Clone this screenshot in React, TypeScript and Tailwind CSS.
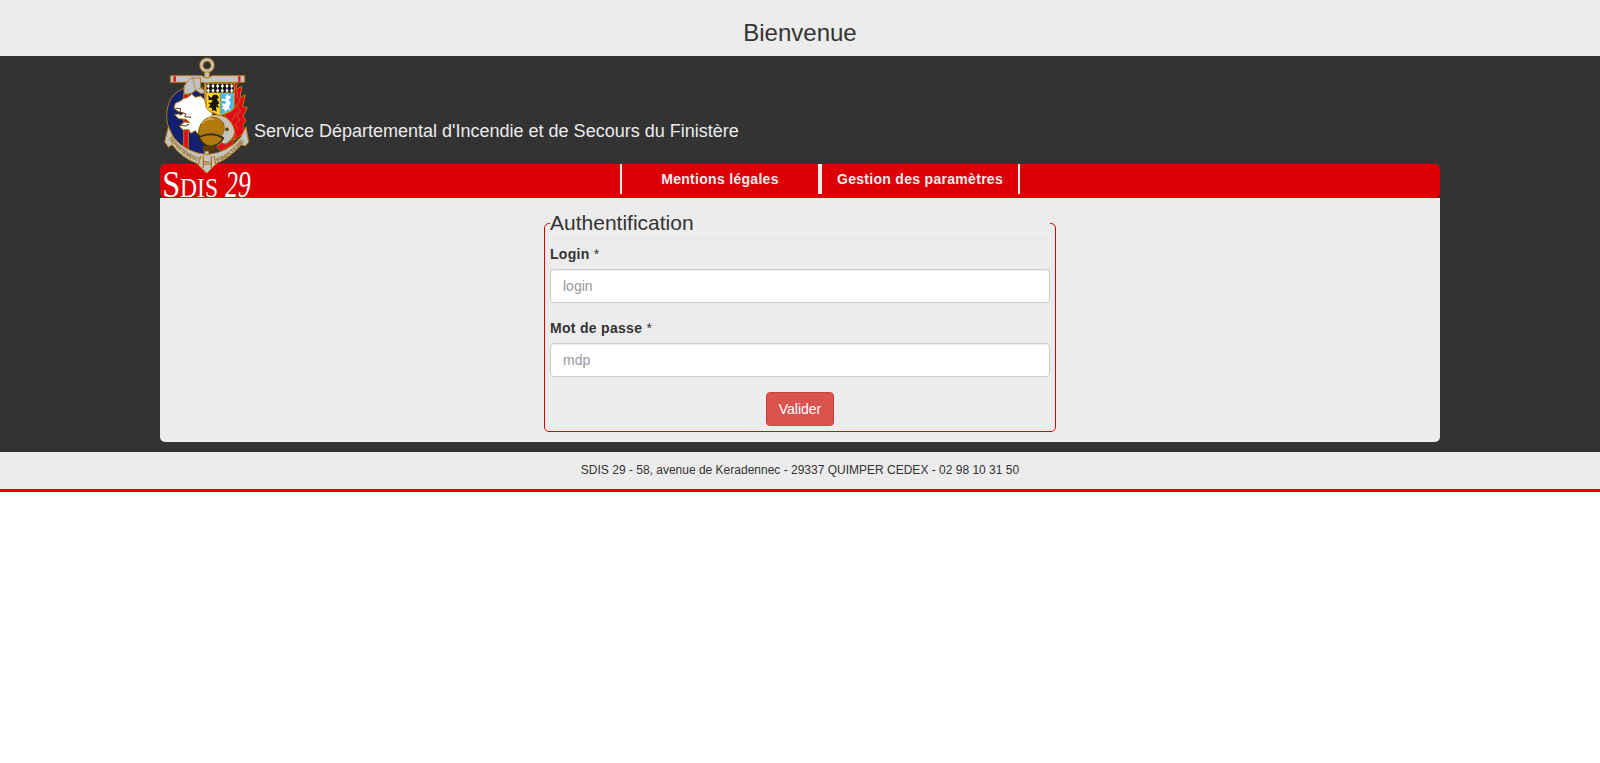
function Crest() {
  const gold = "#b27a0c";
  return (
    <svg
      viewBox="0 0 294 432"
      className="absolute -top-[2px] -left-[2px] h-[144px] w-[98px]"
      role="img"
      aria-label="SDIS 29"
    >
      <g stroke={gold} strokeWidth="3" strokeLinejoin="round">
        {/* anchor ring */}
        <circle cx="147" cy="34" r="17" fill="none" strokeWidth="13" />
        <circle cx="147" cy="34" r="17" fill="none" stroke="#c3c3c3" strokeWidth="7" />
        {/* blue disc */}
        <path d="M82 102C44 112 26 148 26 186C26 222 46 252 68 276L150 320V102Z" fill="#13206f" />
        {/* flames */}
        <path
          d="M165 88L176 70L182 86L198 68L203 84L222 72L220 90L240 78L234 106L252 96L246 132L262 122L254 158L268 160L256 186L264 200L254 214L262 232L226 262L204 240L200 170Z"
          fill="#e30a1c"
        />
        <path d="M236 106L238 128L246 140L236 156L248 170L236 184L246 198L232 210L240 226M222 200L234 176M228 166L238 152M212 244L222 214" fill="none" strokeWidth="2.5" />
        {/* anchor stock and shank */}
        <path d="M140 54H154V72H140Z" fill="#c3c3c3" />
        <path d="M37 65H132Q147 78 162 65H260V85H162Q147 92 132 85H37Z" fill="#c3c3c3" />
        <path d="M50 67V83M244 67V83" stroke="#e30a1c" strokeWidth="7" />
        <path d="M140 88H152V320H140Z" fill="#c3c3c3" />
        {/* axe */}
        <path d="M77 120H91V290H77Z" fill="#e30a1c" />
        <path d="M78 112V98Q90 74 104 72H128V102Q140 108 140 112V118H128L112 108Q104 120 92 120H78Z" fill="#c3c3c3" />
        <path d="M104 72L112 106M128 102L112 108" fill="none" strokeWidth="2" />
        {/* dog head */}
        <path
          d="M101 120L112 130L128 126L140 138L146 160L160 172L164 184L134 204L120 240L112 230L98 238L92 226L76 228L64 216L80 204L96 206L84 196L62 194L50 182L62 180L68 184L76 178L60 172L48 162L52 148L66 142L76 134L90 130Z"
          fill="#fff"
        />
        <path d="M52 162L68 164L66 174L84 180L80 188L100 190M64 214L82 216L94 210" fill="none" stroke="#5a3b08" strokeWidth="3" />
        {/* coat of arms */}
        <path d="M144 87H229V156Q226 174 204 178L187 186L170 178Q146 172 144 156Z" fill="#ffd42a" />
      </g>
      <path d="M187 118H227V156Q224 172 204 175L187 183Z" fill="#42b8ee" />
      <path d="M146 89H227V116H146Z" fill="#111" />
      <path
        d="M146 96l5-7 5 7-5 7zM160 96l5-7 5 7-5 7zM174 96l5-7 5 7-5 7zM188 96l5-7 5 7-5 7zM202 96l5-7 5 7-5 7zM216 96l5-7 5 7-5 7zM146 110l5-7 5 7-5 6zM160 110l5-7 5 7-5 6zM174 110l5-7 5 7-5 6zM188 110l5-7 5 7-5 6zM202 110l5-7 5 7-5 6zM216 110l5-7 5 7-5 6z"
        fill="#fff"
      />
      <path
        d="M151 124L160 132L166 122L176 122L183 130L177 136L184 148L178 152L184 162L174 158L176 174L168 168L162 172L162 162L150 160L158 154L150 146L160 146L164 138L152 138Z"
        fill="#17150f"
      />
      <path
        d="M202 126L210 120L222 126L218 134L212 136L218 148L213 158L217 168L208 166L202 174L198 164L191 166L196 156L190 148L202 150L204 142L192 140L190 134L204 136Z"
        fill="#fff"
      />
      <path d="M210 122L222 128L216 134" fill="none" stroke="#176b9c" strokeWidth="2" />
      <path d="M187 118V184" stroke="#b27a0c" strokeWidth="2" />

      <g stroke={gold} strokeWidth="3" strokeLinejoin="round">
        {/* helmet */}
        <path d="M122 250Q118 204 152 190Q172 178 202 190Q224 202 230 232Q230 252 206 268Q184 276 160 274Z" fill="#c3c3c3" />
        <path d="M122 244Q120 206 152 191Q178 184 196 206Q204 226 192 244Q158 232 122 244Z" fill={gold} stroke="#7b520a" strokeWidth="2" />
        <path d="M150 193Q172 176 206 196M200 204Q220 216 214 250M132 208Q150 190 168 196" fill="none" stroke="#e3c78b" strokeWidth="3" />
        <circle cx="207" cy="226" r="5" fill="#13206f" />
        <path d="M120 244Q126 250 138 244Q168 236 196 252Q188 270 160 278Q134 278 120 244Z" fill={gold} stroke="#332a16" strokeWidth="5" />
        <path d="M134 276H172V292H134Z" fill="#5a3b08" stroke="none" />
        <path d="M176 280L192 264L200 274L222 260L234 240L224 272L190 290Z" fill="#e30a1c" strokeWidth="2" />
        {/* ribbon */}
        <path
          d="M31 218L46 250Q84 296 147 302Q210 296 248 250L264 218L272 264L262 276L250 272Q216 312 176 328L146 358L116 328Q72 312 42 272L32 280L20 264Z"
          fill="#c3c3c3"
        />
        <path d="M128 306L120 334M136 306V342M160 306V342M168 306L174 334" fill="none" strokeWidth="4" />
      </g>
      <path id="ribbon-left" d="M32 254Q68 304 124 325" fill="none" />
      <path id="ribbon-right" d="M178 325Q228 306 262 256" fill="none" />
      <g fill="#9a6908" fontFamily="Liberation Sans, Arial, sans-serif" fontSize="17" fontWeight="bold">
        <text>
          <textPath href="#ribbon-left" textLength="112" lengthAdjust="spacingAndGlyphs">
            DEPARTEMENT
          </textPath>
        </text>
        <text>
          <textPath href="#ribbon-right" textLength="104" lengthAdjust="spacingAndGlyphs">
            FINISTERE
          </textPath>
        </text>
        <text x="138" y="334" fontSize="15">
          DU
        </text>
      </g>
      <g fill="#fff" fontFamily="Liberation Serif, Times New Roman, serif">
        <text x="13" y="430" fontSize="112" textLength="54" lengthAdjust="spacingAndGlyphs">
          S
        </text>
        <text x="66" y="430" fontSize="84" textLength="114" lengthAdjust="spacingAndGlyphs">
          DIS
        </text>
        <text x="202" y="430" fontSize="112" fontStyle="italic" textLength="76" lengthAdjust="spacingAndGlyphs">
          29
        </text>
      </g>
    </svg>
  );
}

function NavItem({ label }: { label: string }) {
  return (
    <li className="h-[30px] w-[200px] border-x-2 border-[#ececec] text-center leading-[30px]">
      <a href="#" className="text-sm leading-[30px] font-bold tracking-[0.3px] text-[#ececec]">
        {label}
      </a>
    </li>
  );
}

function Field({ id, label, placeholder, type }: { id: string; label: string; placeholder: string; type: string }) {
  return (
    <div className="mb-[15px]">
      <label htmlFor={id} className="mb-[5px] block h-5 text-sm leading-5 font-bold tracking-[0.3px]">
        {label} <span className="font-normal">*</span>
      </label>
      <input
        id={id}
        type={type}
        placeholder={placeholder}
        className="block h-[34px] w-full rounded border border-[#cccccc] bg-white px-3 py-1.5 text-sm shadow-[inset_0_1px_1px_rgba(0,0,0,0.075)] placeholder:text-[#999999]"
      />
    </div>
  );
}

export default function App() {
  return (
    <div className="bg-white font-['Liberation_Sans',Arial,sans-serif] text-sm text-[#333333]">
      <header className="h-14 bg-[#ececec] pt-5 text-center">
        <h1 className="text-2xl leading-[26px]">Bienvenue</h1>
      </header>

      <div className="bg-[#333333] pb-[10px]">
        <div className="relative mx-auto w-[1280px]">
          <div className="h-[108px] pt-[62px] pl-[94px]">
            <p className="text-lg leading-[26px] text-[#ececec]">
              Service Départemental d'Incendie et de Secours du Finistère
            </p>
          </div>
          <nav className="h-[34px] rounded-[5px] bg-[#dc0005]">
            <ul className="flex pl-[460px]">
              <NavItem label="Mentions légales" />
              <NavItem label="Gestion des paramètres" />
            </ul>
          </nav>
          <Crest />

          <main className="h-[244px] rounded-b-[5px] bg-[#ececec] pt-[10px]">
            <form>
              <fieldset className="mx-auto w-[512px] rounded-[5px] border border-[#dc0005] px-[5px] pb-[5px]">
                <legend className="mb-[5px] w-full border-b border-[#e5e5e5] text-[21px] leading-[30px]">
                  Authentification
                </legend>
                <Field id="login" label="Login" placeholder="login" type="text" />
                <Field id="mdp" label="Mot de passe" placeholder="mdp" type="password" />
                <div className="flex justify-center">
                  <button
                    type="button"
                    className="h-[34px] rounded border border-[#d43f3a] bg-[#d9534f] px-3 text-sm leading-5 text-white"
                  >
                    Valider
                  </button>
                </div>
              </fieldset>
            </form>
          </main>
        </div>
      </div>

      <footer className="h-10 border-b-[3px] border-[#dc0005] bg-[#ececec] pt-[9px] text-center text-xs leading-[18px]">
        SDIS 29 - 58, avenue de Keradennec - 29337 QUIMPER CEDEX - 02 98 10 31 50
      </footer>
    </div>
  );
}
